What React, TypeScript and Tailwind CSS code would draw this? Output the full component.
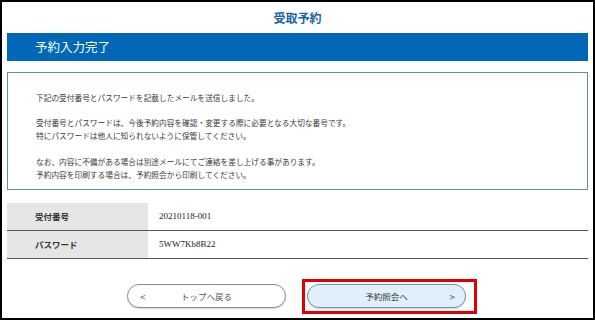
import React from 'react';

const jp = { fontFamily: '"Noto Sans CJK JP", "Noto Sans", sans-serif' };

const rows = [
  { label: '受付番号', value: '20210118-001' },
  { label: 'パスワード', value: '5WW7Kb8B22' },
];

const App: React.FC = () => {
  return (
    <div
      className="w-[595px] h-[320px] box-border border-2 border-black bg-white overflow-hidden text-[#333]"
      style={jp}
    >
      {/* page title */}
      <div className="h-[31px] flex items-center justify-center text-[12px] font-bold text-[#1b64a8]">
        受取予約
      </div>

      <div className="mx-[5px]">
        <div className="h-[28px] bg-[#0068b7] flex items-center pl-[28px] text-white text-[12.5px]">
          予約入力完了
        </div>

        <div className="mt-[11px] h-[118px] box-border border border-[#5b8db6] px-[28px] pt-[18px] text-[7.7px] leading-[13px] text-[#3a3a3a]">
          <p>下記の受付番号とパスワードを記載したメールを送信しました。</p>
          <p className="mt-[12px]">
            受付番号とパスワードは、今後予約内容を確認・変更する際に必要となる大切な番号です。
            <br />
            特にパスワードは他人に知られないように保管してください。
          </p>
          <p className="mt-[13px]">
            なお、内容に不備がある場合は別途メールにてご連絡を差し上げる事があります。
            <br />
            予約内容を印刷する場合は、予約照会から印刷してください。
          </p>
        </div>

        <div className="mt-[13px]">
          {rows.map((row) => (
            <div key={row.label} className="flex h-[28px] border-b border-[#555]">
              <div className="w-[141px] bg-[#e6e6e6] flex items-center pl-[28px] text-[8.5px] font-bold text-[#333]">
                {row.label}
              </div>
              <div
                className="flex-1 flex items-center pl-[11px] text-[9px] text-[#222]"
                style={{ fontFamily: '"Liberation Serif", serif' }}
              >
                {row.value}
              </div>
            </div>
          ))}
        </div>

        <div className="mt-[20px] flex items-start pl-[120px] gap-[16px]">
          <button className="mt-[5px] w-[159px] h-[24px] rounded-full border border-[#8e8e8e] bg-white shadow-[0_1px_1px_rgba(0,0,0,0.15)] relative flex items-center justify-center text-[8.5px] text-[#555]">
            <span className="absolute left-[12px] text-[10px] text-[#666]">&lt;</span>
            トップへ戻る
          </button>

          <div className="border-[3px] border-[#e00000] pl-[2px] pr-[8px] pt-[2px] pb-[3px]">
            <button className="w-[159px] h-[24px] rounded-full border border-[#7890a0] bg-[#e0f0fa] shadow-[0_1px_1px_rgba(0,0,0,0.15)] relative flex items-center justify-center text-[8.5px] text-[#333]">
              予約照会へ
              <span className="absolute right-[10px] text-[10px] text-[#555]">&gt;</span>
            </button>
          </div>
        </div>
      </div>
    </div>
  );
};

export default App;
